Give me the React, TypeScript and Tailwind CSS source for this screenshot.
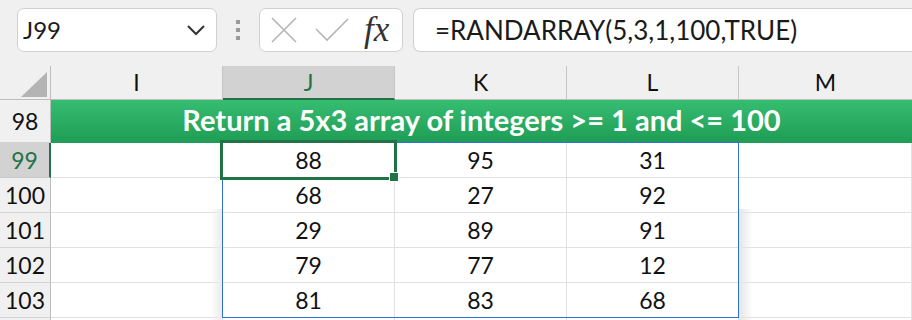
import React from "react";

const data = [
  [88, 95, 31],
  [68, 27, 92],
  [29, 89, 91],
  [79, 77, 12],
  [81, 83, 68],
];

function Cell({ children, className = "" }: { children?: React.ReactNode; className?: string }) {
  return (
    <div className={`flex items-center justify-center border-r border-b border-[#e1e1e1] bg-white text-[23px] text-[#111] ${className}`}>
      {children}
    </div>
  );
}

function RowHead({ n, active = false }: { n: string; active?: boolean }) {
  return (
    <div
      className={`flex items-center justify-center border-b text-[23px] ${
        active
          ? "bg-[#d2d2d2] text-[#217346] border-b-[#c8c8c8] border-r-2 border-r-[#217346]"
          : "bg-[#f0f0f0] text-[#111] border-b-[#d4d4d4] border-r border-r-[#bdbdbd]"
      }`}
    >
      {n}
    </div>
  );
}

function ColHead({ l, active = false, last = false }: { l: string; active?: boolean; last?: boolean }) {
  return (
    <div
      className={`flex items-center justify-center text-[23px] ${last ? "" : "border-r border-r-[#c6c6c6]"} ${
        active
          ? "bg-[#d2d2d2] text-[#217346] border-b-2 border-b-[#217346]"
          : "bg-[#f0f0f0] text-[#111] border-b border-b-[#bdbdbd]"
      }`}
    >
      {l}
    </div>
  );
}

export default function App() {
  return (
    <div className="w-[912px] h-[320px] overflow-hidden bg-[#f0f0f0] font-[Lato,'Open_Sans',sans-serif]">
      {/* formula bar */}
      <div className="flex h-[66px] items-start pt-[8px] pl-[17px]">
        <div className="flex h-[44px] w-[200px] items-center justify-between rounded-[7px] border border-[#d0d0d0] bg-white pl-[5px] pr-[10px] text-[24px] text-[#1a1a1a]">
          <span>J99</span>
          <svg width="20" height="12" viewBox="0 0 20 12" fill="none">
            <path d="M2 2 L10 10 L18 2" stroke="#333" strokeWidth="2" />
          </svg>
        </div>
        <div className="flex h-[44px] w-[42px] flex-col items-center justify-center gap-[4px]">
          <div className="h-[4px] w-[4px] bg-[#9a9a9a]" />
          <div className="h-[4px] w-[4px] bg-[#9a9a9a]" />
          <div className="h-[4px] w-[4px] bg-[#9a9a9a]" />
        </div>
        <div className="flex h-[44px] w-[144px] items-center rounded-[7px] border border-[#d0d0d0] bg-white pl-[11px]">
          <svg width="26" height="26" viewBox="0 0 26 26" fill="none">
            <path d="M1 1 L25 25 M25 1 L1 25" stroke="#b5b5b5" strokeWidth="1.6" />
          </svg>
          <svg className="ml-[18px]" width="34" height="24" viewBox="0 0 34 24" fill="none">
            <path d="M1 11 L12 22 L33 1" stroke="#b5b5b5" strokeWidth="1.6" />
          </svg>
          <span className="ml-[15px] mt-[-2px] font-['Liberation_Serif',serif] text-[35px] italic leading-none text-[#333]">fx</span>
        </div>
        <div className="ml-[10px] flex h-[44px] flex-1 items-center rounded-l-[7px] border border-r-0 border-[#d0d0d0] bg-white pl-[21px] text-[26px] text-[#1a1a1a]">
          =RANDARRAY(5,3,1,100,TRUE)
        </div>
      </div>

      {/* grid */}
      <div className="relative grid grid-cols-[51px_172px_172px_172px_172px_173px] grid-rows-[34px_43px_35px_35px_35px_35px_35px_35px]">
        {/* corner */}
        <div className="relative border-r border-r-[#bdbdbd] border-b border-b-[#bdbdbd] bg-[#f0f0f0]">
          <svg className="absolute left-[21px] top-[6px]" width="27" height="26" viewBox="0 0 27 26">
            <polygon points="0,25 26,25 26,0" fill="#b4b4b4" />
          </svg>
        </div>
        <ColHead l="I" />
        <ColHead l="J" active />
        <ColHead l="K" />
        <ColHead l="L" />
        <ColHead l="M" last />

        <RowHead n="98" />
        <div className="col-span-5 flex items-center justify-center bg-gradient-to-b from-[#36bd71] to-[#1f9c55] pb-[3px] text-[29px] font-bold text-white">
          Return a 5x3 array of integers &gt;= 1 and &lt;= 100
        </div>

        {data.map((row, i) => (
          <React.Fragment key={i}>
            <RowHead n={String(99 + i)} active={i === 0} />
            <Cell />
            {row.map((v, j) => (
              <Cell key={j}>{v}</Cell>
            ))}
            <Cell />
          </React.Fragment>
        ))}
        <RowHead n="" />
        <Cell />
        <Cell />
        <Cell />
        <Cell />
        <Cell />

        {/* spill shadows */}
        <div className="pointer-events-none absolute left-[739px] top-[143px] h-[175px] w-[14px] bg-gradient-to-r from-[#e6e6e6] to-transparent" />
        <div className="pointer-events-none absolute left-[210px] top-[143px] h-[175px] w-[12px] bg-gradient-to-l from-[#ececec] to-transparent" />
        {/* spill border */}
        <div className="pointer-events-none absolute left-[222px] top-[76px] h-[176px] w-[517px] border border-[#3270d8]" />
        {/* selection */}
        <div className="pointer-events-none absolute left-[220px] top-[74px] h-[40px] w-[177px] border-[3px] border-[#217346]" />
        <div className="pointer-events-none absolute left-[389px] top-[106px] h-[10px] w-[10px] border border-white bg-[#217346]" />
      </div>
    </div>
  );
}
